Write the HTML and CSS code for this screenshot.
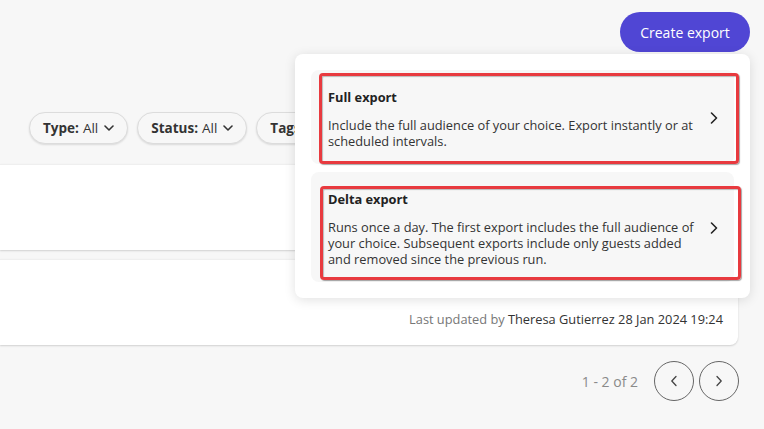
FILE: index.html
```html
<!DOCTYPE html>
<html lang="en">
<head>
<meta charset="utf-8">
<title>Exports</title>
<link rel="stylesheet" href="styles.css">
</head>
<body>
<div class="page">
  <div class="header">
    <button class="btn-primary">Create export</button>
  </div>
  <div class="filters">
    <button class="chip"><b>Type:</b> All <svg class="chev" viewBox="0 0 10 6" width="10" height="6"><path d="M1 1l4 4 4-4" fill="none" stroke="currentColor" stroke-width="1.6" stroke-linecap="round" stroke-linejoin="round"/></svg></button>
    <button class="chip"><b>Status:</b> All <svg class="chev" viewBox="0 0 10 6" width="10" height="6"><path d="M1 1l4 4 4-4" fill="none" stroke="currentColor" stroke-width="1.6" stroke-linecap="round" stroke-linejoin="round"/></svg></button>
    <button class="chip"><b>Tags:</b> All <svg class="chev" viewBox="0 0 10 6" width="10" height="6"><path d="M1 1l4 4 4-4" fill="none" stroke="currentColor" stroke-width="1.6" stroke-linecap="round" stroke-linejoin="round"/></svg></button>
  </div>
  <div class="list">
    <div class="card"></div>
    <div class="card card-last">
      <div class="updated"><span class="muted">Last updated by</span> Theresa Gutierrez 28 Jan 2024 19:24</div>
    </div>
  </div>
  <div class="pager">
    <span class="count">1 - 2 of 2</span>
    <button class="circle"><svg viewBox="0 0 8 12" width="8" height="12"><path d="M6 1.5L1.8 6 6 10.5" fill="none" stroke="currentColor" stroke-width="1.3" stroke-linecap="round" stroke-linejoin="round"/></svg></button>
    <button class="circle"><svg viewBox="0 0 8 12" width="8" height="12"><path d="M2 1.5L6.2 6 2 10.5" fill="none" stroke="currentColor" stroke-width="1.3" stroke-linecap="round" stroke-linejoin="round"/></svg></button>
  </div>

  <div class="menu">
    <div class="menu-item item-full">
      <div class="item-text">
        <div class="item-title">Full export</div>
        <div class="item-desc">Include the full audience of your choice. Export instantly or at scheduled intervals.</div>
      </div>
      <svg class="item-chev" viewBox="0 0 8 12" width="8" height="12"><path d="M1.5 1L6.5 6 1.5 11" fill="none" stroke="currentColor" stroke-width="1.6" stroke-linecap="round" stroke-linejoin="round"/></svg>
    </div>
    <div class="menu-item item-delta">
      <div class="item-text">
        <div class="item-title">Delta export</div>
        <div class="item-desc">Runs once a day. The first export includes the full audience of your choice. Subsequent exports include only guests added and removed since the previous run.</div>
      </div>
      <svg class="item-chev" viewBox="0 0 8 12" width="8" height="12"><path d="M1.5 1L6.5 6 1.5 11" fill="none" stroke="currentColor" stroke-width="1.6" stroke-linecap="round" stroke-linejoin="round"/></svg>
    </div>
  </div>
</div>
</body>
</html>
```

FILE: styles.css
```css
* { box-sizing: border-box; }
html, body { margin: 0; padding: 0; }
body {
  background: #f7f7f7;
  font-family: "Open Sans", "Noto Sans", sans-serif;
  color: #222;
  width: 764px;
  height: 429px;
  overflow: hidden;
}
.page { position: relative; height: 429px; }
button { font-family: inherit; cursor: pointer; }

.header {
  display: flex;
  justify-content: flex-end;
  padding: 12px 14px 0 0;
}
.btn-primary {
  width: 130px;
  height: 40px;
  border: none;
  border-radius: 20px;
  background: #5046d4;
  color: #fff;
  font-size: 14px;
  padding: 0;
}

.filters {
  display: flex;
  gap: 9px;
  margin-top: 60px;
  padding-left: 29px;
}
.chip {
  height: 32px;
  display: flex;
  align-items: center;
  gap: 5px;
  padding: 0 13px;
  border: 1px solid #dcdcdc;
  border-radius: 16px;
  background: #f7f7f7;
  box-shadow: 0 1px 2px rgba(0,0,0,.12);
  font-size: 13.5px;
  color: #333;
  white-space: nowrap;
}
.chip b { font-weight: 700; margin-right: -1px; }
.chip .chev { margin-left: 1px; color: #333; }

.list {
  margin-top: 20px;
  display: flex;
  flex-direction: column;
  gap: 9px;
  margin-right: 26px;
}
.card {
  height: 86px;
  background: #fff;
  border-top: 1px solid #efefef;
  box-shadow: 0 1px 2px rgba(0,0,0,.16);
  border-radius: 0 0 8px 0;
}
.card-last {
  display: flex;
  align-items: flex-end;
  justify-content: flex-end;
  padding: 0 15px 17px 0;
}
.updated { font-size: 12.8px; color: #333; }
.muted { color: #777; }

.pager {
  display: flex;
  align-items: center;
  justify-content: flex-end;
  gap: 5px;
  margin-top: 16px;
  padding-right: 25px;
}
.count { font-size: 14px; color: #8a8a8a; margin-right: 11px; }
.circle {
  width: 40px;
  height: 40px;
  border-radius: 50%;
  border: 1px solid #666;
  background: transparent;
  color: #444;
  display: flex;
  align-items: center;
  justify-content: center;
  padding: 0;
}

.menu {
  position: absolute;
  left: 295px;
  top: 54px;
  width: 455px;
  background: #fff;
  border-radius: 8px;
  box-shadow: 0 2px 12px rgba(0,0,0,.12);
  padding: 16px;
  display: flex;
  flex-direction: column;
  gap: 8px;
}
.menu-item {
  position: relative;
  background: #f7f7f7;
  border-radius: 8px;
  display: flex;
  align-items: center;
  padding: 17px 14px 15px 17px;
  width: 423px;
}
.item-text { flex: 1; padding-right: 10px; }
.item-title { font-size: 12.8px; font-weight: 700; line-height: 20px; color: #222; }
.item-desc { font-size: 12.8px; line-height: 16px; margin-top: 10px; color: #333; }
.item-chev { color: #222; flex: none; margin-right: 2px; }

.menu-item::after {
  content: "";
  position: absolute;
  border: 3px solid #e83a3f;
  border-radius: 4px;
  box-shadow: 1px 1px 1px rgba(0,0,0,.35), inset 1px 1px 1px rgba(0,0,0,.25);
  pointer-events: none;
}
.item-full::after { left: 8px; top: 3px; right: -5px; bottom: 0; }
.item-delta::after { left: 9px; top: 14px; right: -7px; bottom: 2px; }
```
